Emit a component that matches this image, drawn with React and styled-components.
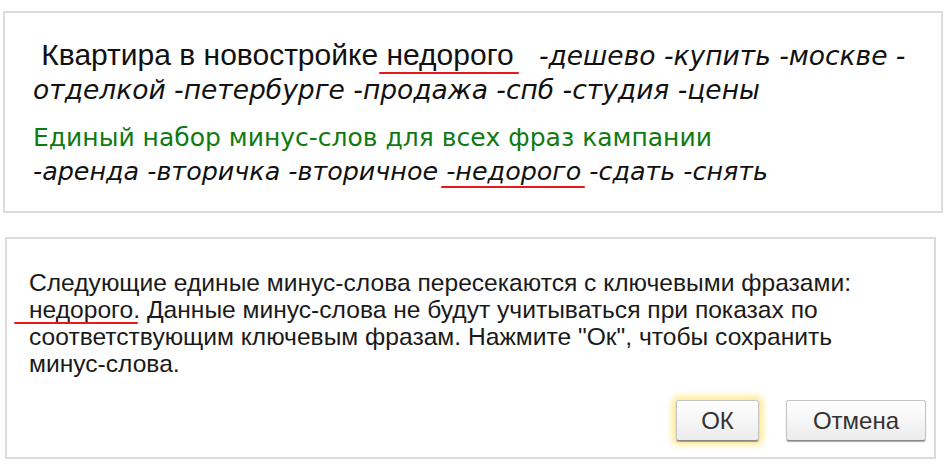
import styled, { createGlobalStyle } from "styled-components";

const GlobalStyle = createGlobalStyle`
  body {
    margin: 0;
    background: #fff;
  }
`;

const App = () => {
  return (
    <Page>
      <GlobalStyle />
      <TopPanel>
        <PhraseLine>
          <Phrase>
            &nbsp;Квартира в новостройке{" "}
            <Marked left={8} right={5} drop={3}>недорого</Marked>
          </Phrase>
          <Minus>
            &nbsp;&nbsp; -дешево -купить -москве -
            <br />
            отделкой -петербурге -продажа -спб -студия -цены
          </Minus>
        </PhraseLine>
        <GreenTitle>Единый набор минус-слов для всех фраз кампании</GreenTitle>
        <MinusLine>
          -аренда -вторичка -вторичное{" "}
          <Marked left={5} right={4} drop={2}>-недорого</Marked> -сдать -снять
        </MinusLine>
      </TopPanel>

      <Dialog>
        <Message>
          Следующие единые минус-слова пересекаются с ключевыми фразами:
          <br />
          <Marked left={15} right={5} drop={1}>недорого</Marked>. Данные минус-слова не
          будут учитываться при показах по соответствующим ключевым фразам. Нажмите
          "Ок", чтобы сохранить минус-слова.
        </Message>
        <Buttons>
          <Button primary>ОК</Button>
          <Button>Отмена</Button>
        </Buttons>
      </Dialog>
    </Page>
  );
};

const Page = styled.div`
  padding: 11px 0 0 3px;
  display: flex;
  flex-direction: column;
  gap: 24px;
`;

const TopPanel = styled.div`
  width: 940px;
  height: 202px;
  box-sizing: border-box;
  border: 2px solid #dcdcdc;
  padding: 26px 10px 0 28px;
`;

const PhraseLine = styled.div`
  font-family: "DejaVu Sans", Verdana, sans-serif;
  font-size: 26.5px;
  line-height: 34px;
  color: #111;
`;

const Phrase = styled.span`
  font-family: "Liberation Sans", Arial, sans-serif;
  font-size: 30px;
  line-height: 1;
`;

const Minus = styled.span`
  font-family: "DejaVu Sans", Verdana, sans-serif;
  font-style: italic;
  font-size: 26.5px;
  color: #111;
`;

const MinusLine = styled.div`
  font-family: "DejaVu Sans", Verdana, sans-serif;
  font-style: italic;
  font-size: 25.4px;
  line-height: 34px;
  color: #111;
`;

const GreenTitle = styled.div`
  margin-top: 15px;
  font-family: "DejaVu Sans", Verdana, sans-serif;
  font-size: 25px;
  line-height: 32px;
  color: #0f7a12;
`;

const Marked = styled.span`
  position: relative;

  &::after {
    content: "";
    position: absolute;
    left: -${(p) => p.left}px;
    right: -${(p) => p.right}px;
    bottom: -${(p) => p.drop}px;
    height: 2px;
    border-radius: 1px;
    background: #e8171b;
  }
`;

const Dialog = styled.div`
  margin-left: 2px;
  width: 931px;
  height: 222px;
  box-sizing: border-box;
  border: 2px solid #dcdcdc;
  padding: 30px 8px 16px 22px;
  display: flex;
  flex-direction: column;
  justify-content: space-between;
`;

const Message = styled.p`
  margin: 0;
  font-family: "Liberation Sans", Arial, sans-serif;
  font-size: 24.6px;
  line-height: 27px;
  color: #1a1a1a;
  max-width: 880px;
`;

const Buttons = styled.div`
  display: flex;
  justify-content: flex-end;
  gap: 27px;
`;

const Button = styled.button`
  height: 41px;
  min-width: ${(p) => (p.primary ? "83px" : "140px")};
  padding: 0 16px;
  font-family: "Liberation Sans", Arial, sans-serif;
  font-size: 24px;
  color: #333;
  background: linear-gradient(#ffffff, #ececec);
  border: 1px solid #c4c4c4;
  border-bottom-color: #888;
  border-radius: 3px;
  box-shadow: ${(p) =>
    p.primary
      ? "0 1px 1px rgba(0,0,0,0.35), 0 0 6px 4px rgba(255, 214, 40, 0.5)"
      : "0 1px 1px rgba(0,0,0,0.35)"};
  cursor: pointer;
`;

export default App;
